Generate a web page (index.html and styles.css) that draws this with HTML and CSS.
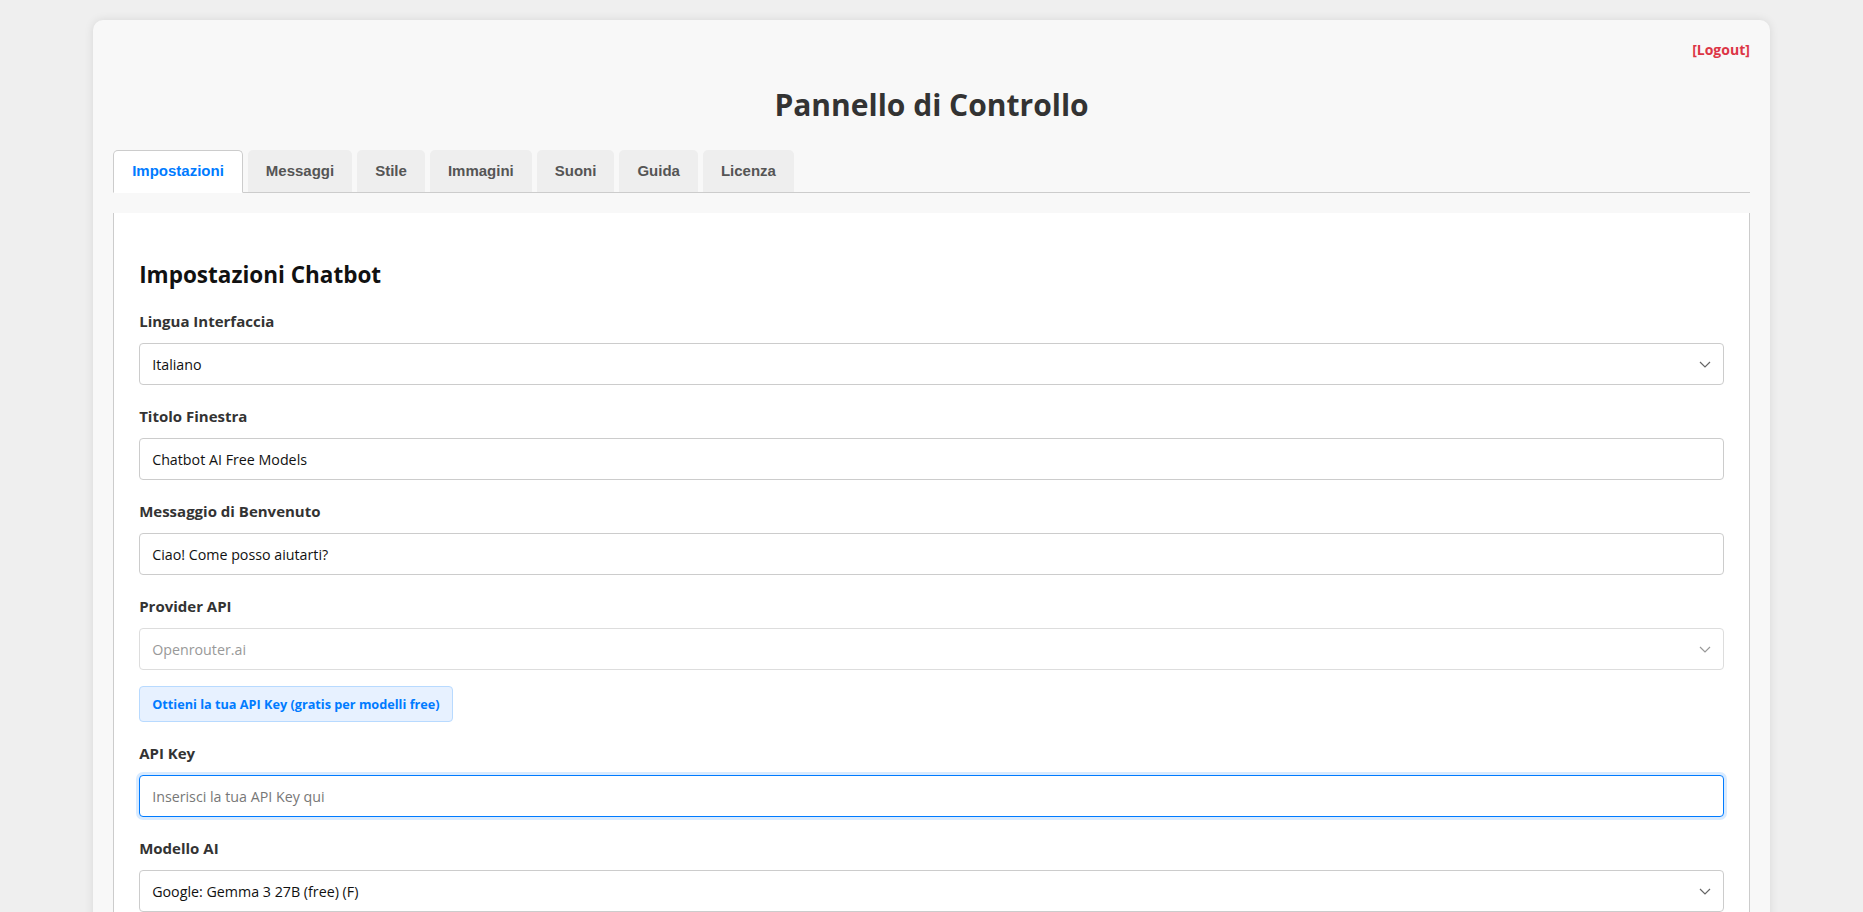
FILE: index.html
```html
<!DOCTYPE html>
<html lang="it">
<head>
<meta charset="utf-8">
<title>Pannello di Controllo</title>
<link rel="stylesheet" href="styles.css">
</head>
<body>
<div class="container">
  <div class="topbar"><a class="logout" href="#">[Logout]</a></div>
  <h1 class="page-title">Pannello di Controllo</h1>
  <div class="tabs">
    <div class="tab active">Impostazioni</div>
    <div class="tab">Messaggi</div>
    <div class="tab">Stile</div>
    <div class="tab">Immagini</div>
    <div class="tab">Suoni</div>
    <div class="tab">Guida</div>
    <div class="tab">Licenza</div>
  </div>
  <div class="panel">
    <h2 class="panel-title">Impostazioni Chatbot</h2>

    <div class="group">
      <label class="label">Lingua Interfaccia</label>
      <div class="select-wrap">
        <select class="field"><option>Italiano</option></select>
        <svg class="chev" width="12" height="7" viewBox="0 0 12 7"><path d="M1 1 L6 6 L11 1" fill="none" stroke="#666" stroke-width="1.2"/></svg>
      </div>
    </div>

    <div class="group">
      <label class="label">Titolo Finestra</label>
      <input class="field" type="text" value="Chatbot AI Free Models">
    </div>

    <div class="group">
      <label class="label">Messaggio di Benvenuto</label>
      <input class="field" type="text" value="Ciao! Come posso aiutarti?">
    </div>

    <div class="group">
      <label class="label">Provider API</label>
      <div class="select-wrap">
        <select class="field" disabled><option>Openrouter.ai</option></select>
        <svg class="chev" width="12" height="7" viewBox="0 0 12 7"><path d="M1 1 L6 6 L11 1" fill="none" stroke="#999" stroke-width="1.2"/></svg>
      </div>
      <a class="key-btn" href="#">Ottieni la tua API Key (gratis per modelli free)</a>
    </div>

    <div class="group">
      <label class="label">API Key</label>
      <input class="field focused" type="text" placeholder="Inserisci la tua API Key qui">
    </div>

    <div class="group">
      <label class="label">Modello AI</label>
      <div class="select-wrap">
        <select class="field"><option>Google: Gemma 3 27B (free) (F)</option></select>
        <svg class="chev" width="12" height="7" viewBox="0 0 12 7"><path d="M1 1 L6 6 L11 1" fill="none" stroke="#666" stroke-width="1.2"/></svg>
      </div>
    </div>
  </div>
</div>
</body>
</html>
```

FILE: styles.css
```css
html, body {
  margin: 0;
}
body {
  padding: 20px 0;
  background: #efefef;
  font-family: "Open Sans", "Noto Sans", sans-serif;
  color: #333;
}
.container {
  width: 90%;
  margin: 0 auto;
  box-sizing: border-box;
  padding: 20px;
  background: #f8f8f8;
  border-radius: 10px;
  box-shadow: 0 0 10px rgba(0, 0, 0, 0.1);
}
.topbar {
  text-align: right;
  font-size: 14px;
  line-height: 20px;
  font-weight: 700;
}
.logout {
  color: #dc3545;
  text-decoration: none;
}
.page-title {
  text-align: center;
  font-size: 30px;
  line-height: 44px;
  font-weight: 700;
  color: #333;
  margin: 23px 0 23px;
}
.tabs {
  display: flex;
  align-items: flex-end;
  gap: 5px;
  border-bottom: 1px solid #ccc;
  margin-bottom: 20px;
}
.tab {
  font-family: "Liberation Sans", Arial, sans-serif;
  font-size: 15px;
  line-height: 18px;
  font-weight: 700;
  color: #555;
  background: #eee;
  padding: 12px 18px;
  border-radius: 5px 5px 0 0;
}
.tab.active {
  background: #fff;
  color: #007bff;
  border: 1px solid #ccc;
  border-bottom-color: #fff;
  padding: 11px 18px 12px;
  margin-bottom: -1px;
}
.panel {
  background: #fff;
  border: 1px solid #ccc;
  border-top: none;
  padding: 25px;
}
.panel-title {
  font-size: 22.5px;
  line-height: 32px;
  font-weight: 700;
  color: #111;
  margin: 21px 0 20px;
}
.group {
  margin-bottom: 21px;
}
.label {
  display: block;
  font-size: 15px;
  line-height: 20px;
  font-weight: 700;
  color: #333;
  margin-bottom: 12px;
}
.field {
  display: block;
  width: 100%;
  box-sizing: border-box;
  height: 42px;
  padding: 0 12px;
  border: 1px solid #ccc;
  border-radius: 4px;
  background: #fff;
  font-family: "Open Sans", "Noto Sans", sans-serif;
  font-size: 14.25px;
  color: #111;
  outline: none;
  -webkit-appearance: none;
  appearance: none;
}
.field::placeholder {
  color: #777;
}
select.field:disabled {
  color: #999;
  border-color: #ddd;
  opacity: 1;
}
.field.focused {
  border-color: #007bff;
  box-shadow: 0 0 0 3px rgba(0, 123, 255, 0.15);
}
.select-wrap {
  position: relative;
}
.chev {
  position: absolute;
  right: 13px;
  top: 18px;
  pointer-events: none;
}
.key-btn {
  display: inline-block;
  margin-top: 16px;
  height: 36px;
  box-sizing: border-box;
  padding: 0 12px;
  line-height: 34px;
  font-size: 12.7px;
  font-weight: 700;
  color: #007bff;
  text-decoration: none;
  background: #e7f1ff;
  border: 1px solid #b8daff;
  border-radius: 4px;
}
```
